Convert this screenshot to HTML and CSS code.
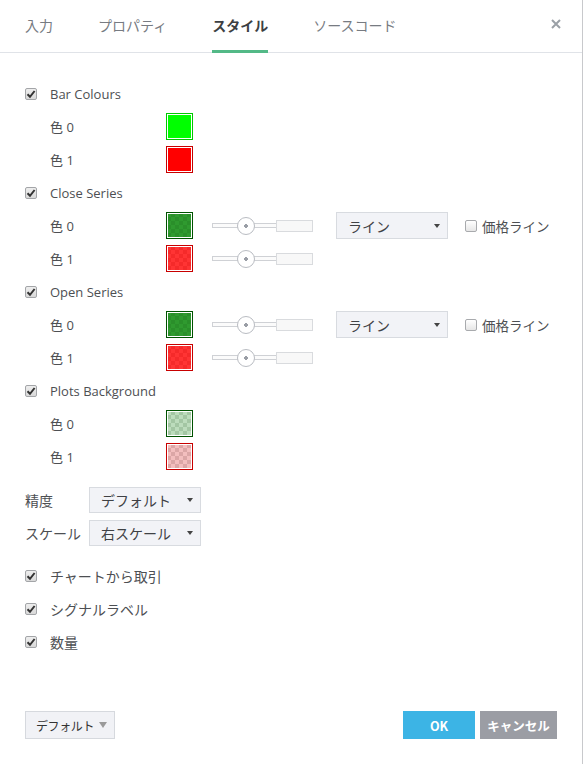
FILE: index.html
```html
<!DOCTYPE html>
<html lang="ja">
<head>
<meta charset="utf-8">
<title>スタイル</title>
<link rel="stylesheet" href="styles.css">
</head>
<body>
<div class="dialog">
  <div class="header">
    <div class="tab">入力</div>
    <div class="tab">プロパティ</div>
    <div class="tab active">スタイル</div>
    <div class="tab">ソースコード</div>
    <div class="close"><svg width="10" height="10" viewBox="0 0 10 10"><path d="M1 1 L9 9 M9 1 L1 9" stroke="#9aa0a6" stroke-width="2"/></svg></div>
  </div>

  <div class="content">
    <div class="row check-row"><span class="cb on"><svg width="10" height="10" viewBox="0 0 10 10"><path d="M1.5 5.2 L4 7.8 L8.6 2" fill="none" stroke="#333" stroke-width="2"/></svg></span><span>Bar Colours</span></div>
    <div class="row color-row"><span class="clabel">色 0</span><span class="swatch sw-lime"></span></div>
    <div class="row color-row"><span class="clabel">色 1</span><span class="swatch sw-red"></span></div>

    <div class="row check-row"><span class="cb on"><svg width="10" height="10" viewBox="0 0 10 10"><path d="M1.5 5.2 L4 7.8 L8.6 2" fill="none" stroke="#333" stroke-width="2"/></svg></span><span>Close Series</span></div>
    <div class="row color-row"><span class="clabel">色 0</span><span class="swatch sw-green"></span>
      <div class="slider"><span class="thin"></span><span class="box"></span><span class="thumb"></span></div>
      <div class="select sel-line"><span>ライン</span><span class="caret"></span></div>
      <span class="cb off"></span><span class="cb-text">価格ライン</span>
    </div>
    <div class="row color-row"><span class="clabel">色 1</span><span class="swatch sw-redc"></span>
      <div class="slider"><span class="thin"></span><span class="box"></span><span class="thumb"></span></div>
    </div>

    <div class="row check-row"><span class="cb on"><svg width="10" height="10" viewBox="0 0 10 10"><path d="M1.5 5.2 L4 7.8 L8.6 2" fill="none" stroke="#333" stroke-width="2"/></svg></span><span>Open Series</span></div>
    <div class="row color-row"><span class="clabel">色 0</span><span class="swatch sw-green"></span>
      <div class="slider"><span class="thin"></span><span class="box"></span><span class="thumb"></span></div>
      <div class="select sel-line"><span>ライン</span><span class="caret"></span></div>
      <span class="cb off"></span><span class="cb-text">価格ライン</span>
    </div>
    <div class="row color-row"><span class="clabel">色 1</span><span class="swatch sw-redc"></span>
      <div class="slider"><span class="thin"></span><span class="box"></span><span class="thumb"></span></div>
    </div>

    <div class="row check-row"><span class="cb on"><svg width="10" height="10" viewBox="0 0 10 10"><path d="M1.5 5.2 L4 7.8 L8.6 2" fill="none" stroke="#333" stroke-width="2"/></svg></span><span>Plots Background</span></div>
    <div class="row color-row"><span class="clabel">色 0</span><span class="swatch sw-pale-green"></span></div>
    <div class="row color-row"><span class="clabel">色 1</span><span class="swatch sw-pale-red"></span></div>

    <div class="group">
      <div class="row field-row"><span class="flabel">精度</span><div class="select sel-field"><span>デフォルト</span><span class="caret"></span></div></div>
      <div class="row field-row"><span class="flabel">スケール</span><div class="select sel-field"><span>右スケール</span><span class="caret"></span></div></div>
    </div>

    <div class="group">
      <div class="row check-row"><span class="cb on"><svg width="10" height="10" viewBox="0 0 10 10"><path d="M1.5 5.2 L4 7.8 L8.6 2" fill="none" stroke="#333" stroke-width="2"/></svg></span><span class="jp">チャートから取引</span></div>
      <div class="row check-row"><span class="cb on"><svg width="10" height="10" viewBox="0 0 10 10"><path d="M1.5 5.2 L4 7.8 L8.6 2" fill="none" stroke="#333" stroke-width="2"/></svg></span><span class="jp">シグナルラベル</span></div>
      <div class="row check-row"><span class="cb on"><svg width="10" height="10" viewBox="0 0 10 10"><path d="M1.5 5.2 L4 7.8 L8.6 2" fill="none" stroke="#333" stroke-width="2"/></svg></span><span class="jp">数量</span></div>
    </div>
  </div>

  <div class="footer">
    <div class="btn-default"><span>デフォルト</span><span class="caret-gray"></span></div>
    <div class="actions">
      <div class="btn btn-ok">OK</div>
      <div class="btn btn-cancel">キャンセル</div>
    </div>
  </div>
</div>
</body>
</html>
```

FILE: styles.css
```css
html, body {
  margin: 0;
  padding: 0;
  background: #ffffff;
}
body {
  font-family: "Open Sans", "Noto Sans CJK JP", sans-serif;
  color: #4d4f53;
  font-size: 13px;
}
.dialog {
  width: 582px;
  height: 764px;
  border-right: 1px solid #c8c9cc;
  display: flex;
  flex-direction: column;
  box-sizing: content-box;
}
.header {
  height: 52px;
  border-bottom: 1px solid #e0e3e8;
  display: flex;
  align-items: stretch;
  gap: 45px;
  padding: 0 21px 0 25px;
  font-family: "Noto Sans CJK JP", sans-serif;
  font-size: 14px;
}
.tab {
  box-sizing: border-box;
  height: 53px;
  line-height: 50px;
  color: #777b82;
  border-bottom: 3px solid transparent;
  white-space: nowrap;
}
.tab.active {
  color: #3c4043;
  font-weight: bold;
  border-bottom-color: #53b987;
}
.close {
  margin-left: auto;
  display: flex;
  align-items: center;
  padding-bottom: 4px;
}
.content {
  padding: 24px 0 0 25px;
}
.row {
  height: 33px;
  display: flex;
  align-items: center;
  white-space: nowrap;
}
.group {
  margin-top: 10px;
}
.cb {
  box-sizing: border-box;
  width: 12px;
  height: 12px;
  border: 1px solid #a3a5a8;
  border-radius: 2px;
  display: flex;
  align-items: center;
  justify-content: center;
  flex: none;
}
.cb.on {
  background: linear-gradient(#eeeeee, #d9d9d9);
  margin-right: 13px;
}
.cb.off {
  background: linear-gradient(#ffffff, #e6e6e6);
  border-color: #a8aaad;
  margin-left: 17px;
  margin-right: 5px;
}
.cb-text {
  font-family: "Noto Sans CJK JP", sans-serif;
  font-size: 13.5px;
}
.jp {
  font-family: "Noto Sans CJK JP", sans-serif;
  font-size: 14px;
}
.color-row {
  padding-left: 25px;
}
.clabel {
  width: 116px;
}
.swatch {
  box-sizing: border-box;
  width: 27px;
  height: 27px;
  border: 1px solid;
  box-shadow: inset 0 0 0 1px #ffffff;
  flex: none;
}
.sw-lime { border-color: #00c800; background: #00ff00; }
.sw-red { border-color: #c80000; background: #ff0000; }
.sw-green {
  border-color: #005200;
  background: repeating-conic-gradient(#2a8f2a 0 25%, #2f9a2f 0 50%) 0 0 / 8px 8px;
}
.sw-redc {
  border-color: #c80000;
  background: repeating-conic-gradient(#f52a2a 0 25%, #ff3434 0 50%) 0 0 / 8px 8px;
}
.sw-pale-green {
  border-color: #005200;
  background: repeating-conic-gradient(#a3c6a3 0 25%, #bcdcbc 0 50%) 0 0 / 8px 8px;
}
.sw-pale-red {
  border-color: #c80000;
  background: repeating-conic-gradient(#dba6a6 0 25%, #f3bebe 0 50%) 0 0 / 8px 8px;
}
.slider {
  position: relative;
  display: flex;
  align-items: center;
  width: 101px;
  height: 18px;
  margin-left: 19px;
}
.slider .thin {
  box-sizing: border-box;
  width: 65px;
  height: 5px;
  border: 1px solid #cfd1d5;
  background: #fbfbfb;
}
.slider .box {
  box-sizing: border-box;
  width: 37px;
  height: 12px;
  margin-left: -1px;
  border: 1px solid #d9dbde;
  background: #f8f8f8;
}
.slider .thumb {
  position: absolute;
  left: 25px;
  top: 0;
  box-sizing: border-box;
  width: 18px;
  height: 18px;
  border: 1px solid #b9bcc2;
  border-radius: 50%;
  background: #ffffff radial-gradient(circle, #9a9ea6 0 1.6px, transparent 2px);
}
.select {
  box-sizing: border-box;
  height: 27px;
  border: 1px solid #d8dbe0;
  background: #f2f3f7;
  display: flex;
  align-items: center;
  justify-content: space-between;
  padding: 0 7px 0 11px;
  font-family: "Noto Sans CJK JP", sans-serif;
  font-size: 14px;
  color: #3f4145;
  white-space: nowrap;
}
.sel-line {
  width: 112px;
  margin-left: 23px;
}
.sel-field {
  width: 112px;
  height: 26px;
}
.caret {
  width: 0;
  height: 0;
  border-left: 3.5px solid transparent;
  border-right: 3.5px solid transparent;
  border-top: 4px solid #444;
}
.flabel {
  width: 64px;
  font-family: "Noto Sans CJK JP", sans-serif;
  font-size: 14px;
}
.footer {
  margin-top: auto;
  padding: 0 25px 25px 25px;
  display: flex;
  justify-content: space-between;
  align-items: center;
}
.btn-default {
  box-sizing: border-box;
  width: 90px;
  height: 28px;
  border: 1px solid #d6d9de;
  background: #f1f2f6;
  display: flex;
  align-items: center;
  justify-content: space-between;
  padding: 0 7px 0 10px;
  font-family: "Noto Sans CJK JP", sans-serif;
  font-size: 12px;
  letter-spacing: -0.4px;
  color: #333;
  white-space: nowrap;
}
.caret-gray {
  width: 0;
  height: 0;
  border-left: 4.5px solid transparent;
  border-right: 4.5px solid transparent;
  border-top: 6px solid #9a9a9a;
  flex: none;
}
.actions {
  display: flex;
  gap: 5px;
}
.btn {
  height: 28px;
  display: flex;
  align-items: center;
  justify-content: center;
  color: #ffffff;
  font-weight: bold;
  font-family: "Noto Sans CJK JP", sans-serif;
  font-size: 12.5px;
  white-space: nowrap;
}
.btn-ok {
  width: 72px;
  background: #3cb4e5;
}
.btn-cancel {
  width: 77px;
  background: #9b9da4;
}
```
